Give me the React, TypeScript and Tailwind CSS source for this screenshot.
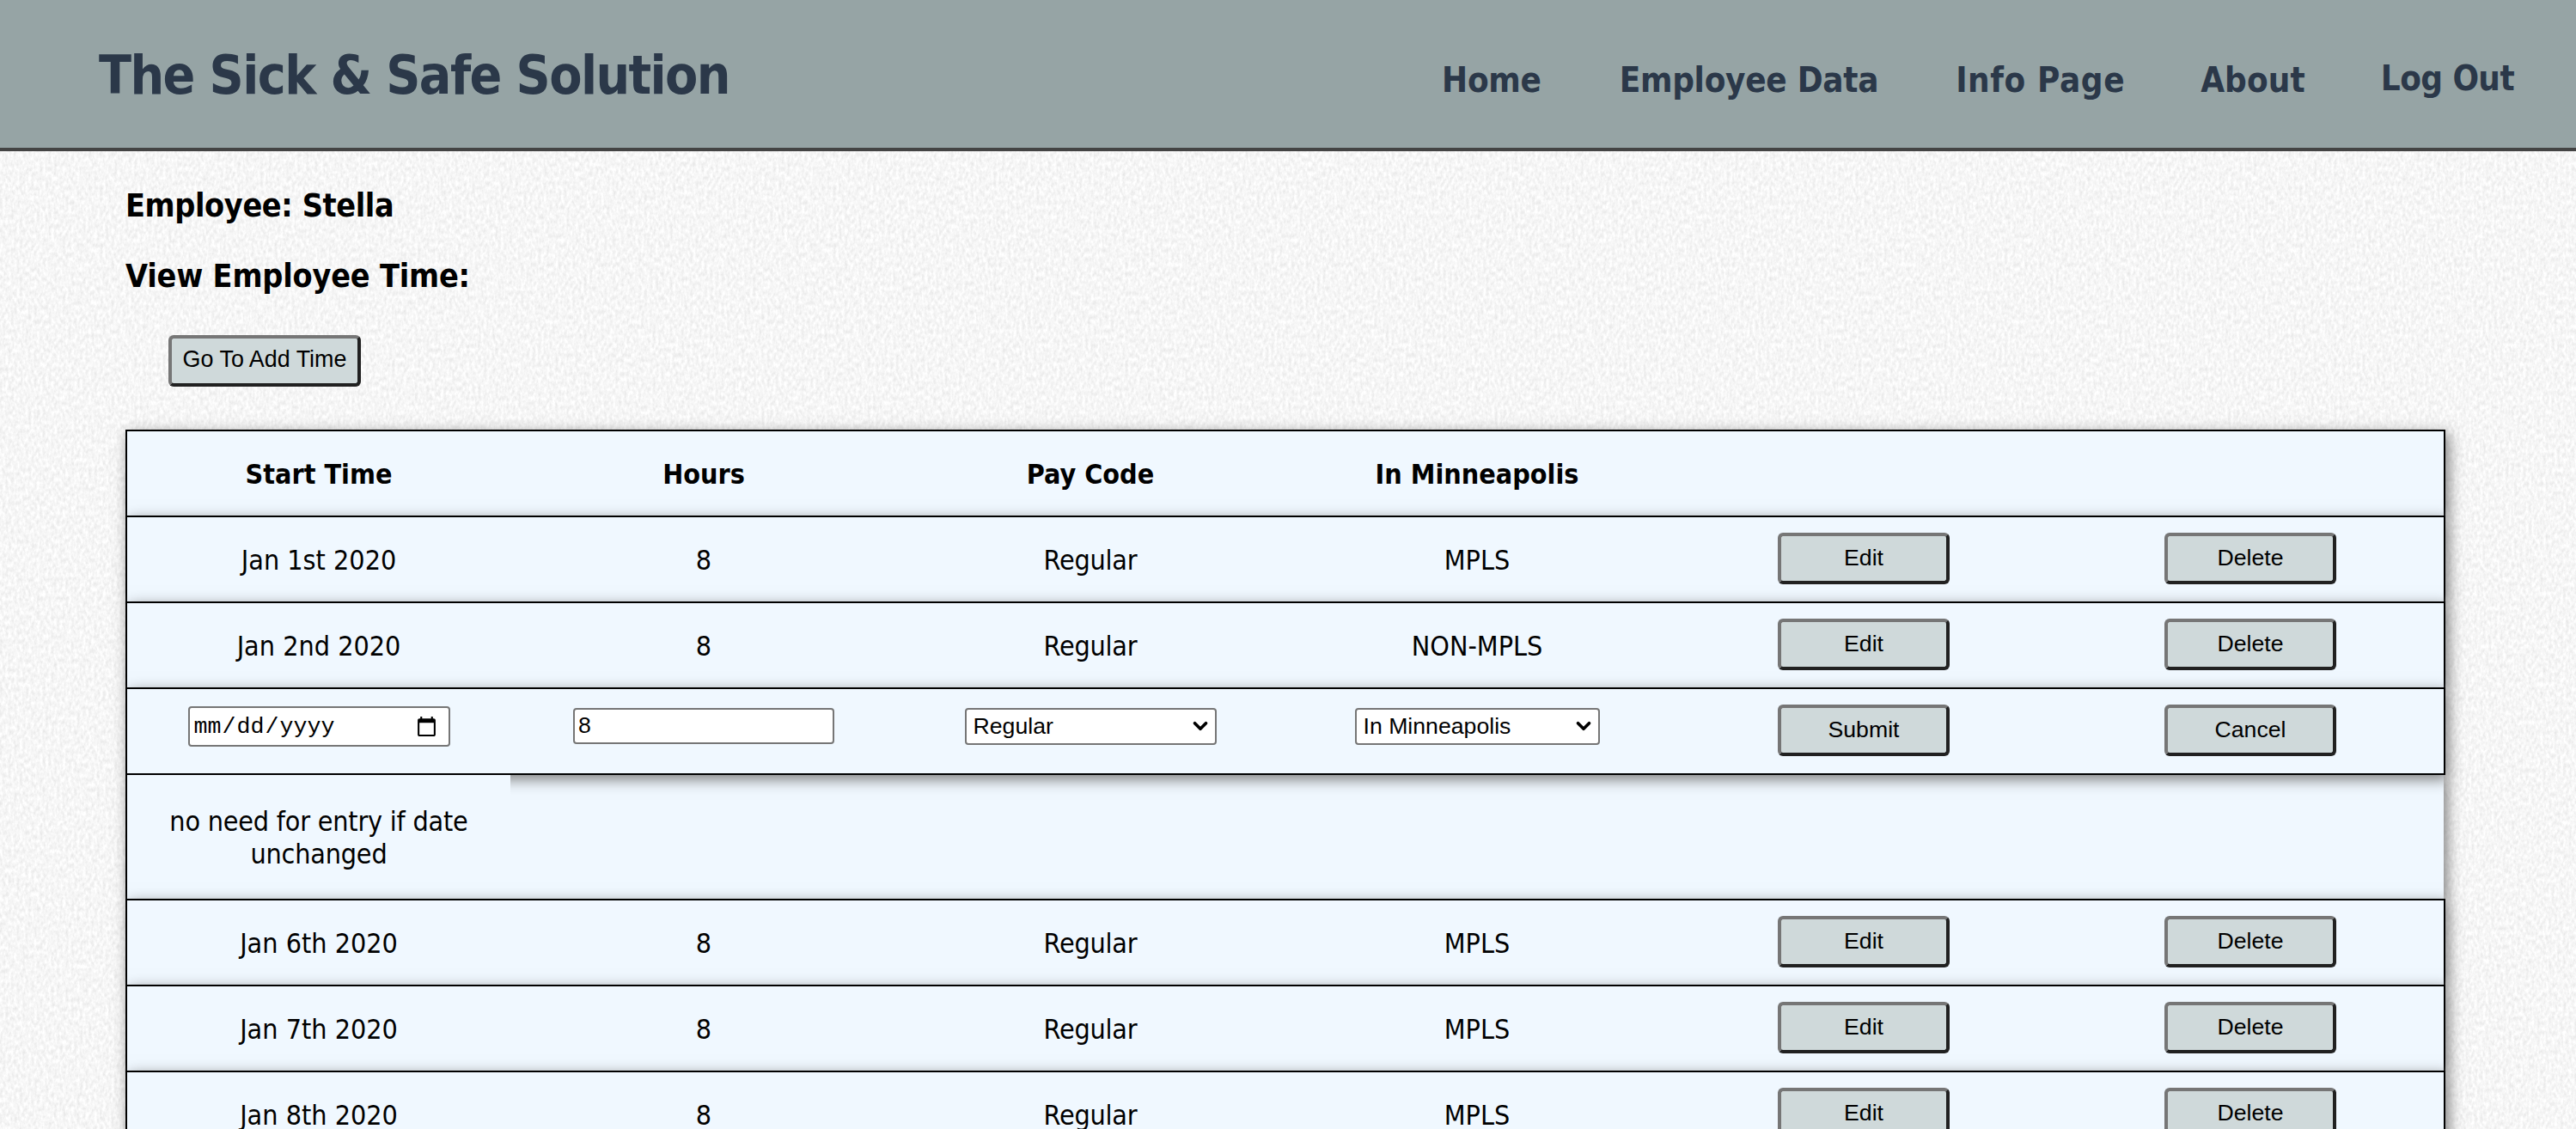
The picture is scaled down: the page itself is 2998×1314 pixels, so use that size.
import React from "react";
import { ChevronDown } from "lucide-react";

const tahoma = "font-['DejaVu_Sans_Condensed','DejaVu_Sans',sans-serif] [font-stretch:condensed]";
const cols = "grid grid-cols-[446px_repeat(5,450px)]";
const rowShadow = "shadow-[4px_5px_16px_#7c7c7c]";
const textCell = "flex items-center justify-center pt-[3px]";

function Btn({ label }: { label: string }) {
  return (
    <button className="w-[200px] h-[60px] box-border rounded-[6px] border-4 border-t-[#767676] border-l-[#767676] border-r-[#212121] border-b-[#212121] bg-[#cfd9da] text-black text-[26.67px] leading-none font-['Liberation_Sans',sans-serif] pb-[2px]">
      {label}
    </button>
  );
}

function DataRow({ date, place }: { date: string; place: string }) {
  return (
    <div className={`relative h-[100px] w-[2700px] box-border border-x-2 border-t-2 border-black bg-[#f0f8ff] ${rowShadow} ${cols} text-[32px] text-black`}>
      <div className={textCell}>{date}</div>
      <div className={textCell}>8</div>
      <div className={`${textCell} tracking-[-0.2px]`}>Regular</div>
      <div className={textCell}>{place}</div>
      <div className="flex justify-center pt-[18px]"><Btn label="Edit" /></div>
      <div className="flex justify-center pt-[18px]"><Btn label="Delete" /></div>
    </div>
  );
}

function FakeSelect({ value, width, options }: { value: string; width: string; options: string[] }) {
  return (
    <div className={`relative ${width} h-[43px]`}>
      <select
        defaultValue={value}
        className="appearance-none w-full h-full box-border bg-white border-2 border-[#767676] rounded-[4px] pl-[8px] text-[26.67px] leading-none text-black font-['Liberation_Sans',sans-serif]"
      >
        {options.map((o) => (
          <option key={o}>{o}</option>
        ))}
      </select>
      <ChevronDown className="absolute right-[6px] top-[8px] w-[26px] h-[26px] text-black pointer-events-none" strokeWidth={3.4} />
    </div>
  );
}

export default function App() {
  return (
    <div className={`relative h-[1314px] w-[2998px] overflow-hidden bg-[#f6f6f6] ${tahoma}`}>
      <svg className="absolute inset-0 w-full h-full" aria-hidden="true">
        <filter id="paper" x="0" y="0" width="100%" height="100%" colorInterpolationFilters="sRGB">
          <feTurbulence type="fractalNoise" baseFrequency="0.3 0.18" numOctaves={3} seed={4} />
          <feColorMatrix values="0.15 0 0 0 0.89  0.15 0 0 0 0.89  0.15 0 0 0 0.89  0 0 0 0 1" />
        </filter>
        <rect width="100%" height="100%" filter="url(#paper)" />
      </svg>

      <header className="relative h-[176px] box-border border-b-4 border-[#444444] bg-[#96a4a5] text-[#2b3849] flex items-start justify-between pl-[115px] pr-[72px]">
        <h1 className="text-[62px] font-bold leading-none tracking-[-1.6px] mt-[57px]">The Sick &amp; Safe Solution</h1>
        <nav className="flex items-start text-[40px] font-bold leading-none mt-[73px]">
          <a className="tracking-[-0.3px]">Home</a>
          <a className="ml-[91px] tracking-[-0.3px]">Employee Data</a>
          <a className="ml-[90px] tracking-[0.6px]">Info Page</a>
          <a className="ml-[88px] tracking-[0.1px]">About</a>
          <a className="ml-[88px] -mt-[2px] tracking-[-0.6px]">Log Out</a>
        </nav>
      </header>

      <main className="relative pl-[146px]">
        <h3 className="text-[37.44px] font-bold leading-none tracking-[-0.4px] text-black mt-[45px]">Employee: Stella</h3>
        <h3 className="text-[37.44px] font-bold leading-none tracking-[-0.2px] text-black mt-[45px]">View Employee Time:</h3>
        <button className="block ml-[50px] mt-[49px] w-[224px] h-[60px] box-border rounded-[6px] border-4 border-t-[#767676] border-l-[#767676] border-r-[#212121] border-b-[#212121] bg-[#cfd9da] text-black text-[26.9px] leading-none font-['Liberation_Sans',sans-serif] pb-[2px]">
          Go To Add Time
        </button>

        <div className="mt-[50px] w-[2698px]">
          <div className={`relative h-[100px] w-[2700px] box-border border-x-2 border-t-2 border-black bg-[#f0f8ff] ${rowShadow} ${cols} text-[32px] font-bold text-black`}>
            <div className={textCell}>Start Time</div>
            <div className={textCell}>Hours</div>
            <div className={textCell}>Pay Code</div>
            <div className={textCell}>In Minneapolis</div>
            <div />
            <div />
          </div>
          <DataRow date="Jan 1st 2020" place="MPLS" />
          <DataRow date="Jan 2nd 2020" place="NON-MPLS" />

          <div className={`relative h-[102px] w-[2700px] box-border border-2 border-black bg-[#f0f8ff] ${rowShadow} ${cols}`}>
            <div className="flex justify-center pt-[20px]">
              <input
                type="date"
                className="w-[305px] h-[47px] box-border bg-white border-2 border-[#767676] rounded-[4px] pl-[4px] pr-[10px] pt-[2px] text-[26.67px] text-black font-['Liberation_Mono',monospace]"
              />
            </div>
            <div className="flex justify-center pt-[22px]">
              <input
                type="text"
                defaultValue="8"
                className="w-[304px] h-[42px] box-border bg-white border-2 border-[#767676] rounded-[4px] px-[4px] text-[26.67px] text-black font-['Liberation_Sans',sans-serif]"
              />
            </div>
            <div className="flex justify-center pt-[22px]">
              <FakeSelect value="Regular" width="w-[293px]" options={["Regular", "Sick", "Safe"]} />
            </div>
            <div className="flex justify-center pt-[22px]">
              <FakeSelect value="In Minneapolis" width="w-[285px]" options={["In Minneapolis", "Not In Minneapolis"]} />
            </div>
            <div className="flex justify-center pt-[18px]"><Btn label="Submit" /></div>
            <div className="flex justify-center pt-[18px]"><Btn label="Cancel" /></div>
          </div>

          <div className={`h-[144px] w-[2698px] bg-[#f0f8ff] ${rowShadow}`}>
            <div className="relative w-[448px] h-full box-border border-l-2 border-black bg-[#f0f8ff] flex items-center justify-center text-center text-[32px] leading-[38px] tracking-[-0.2px] text-black px-[30px] pt-[3px]">
              no need for entry if date unchanged
            </div>
          </div>

          <DataRow date="Jan 6th 2020" place="MPLS" />
          <DataRow date="Jan 7th 2020" place="MPLS" />
          <DataRow date="Jan 8th 2020" place="MPLS" />
        </div>
      </main>
    </div>
  );
}
